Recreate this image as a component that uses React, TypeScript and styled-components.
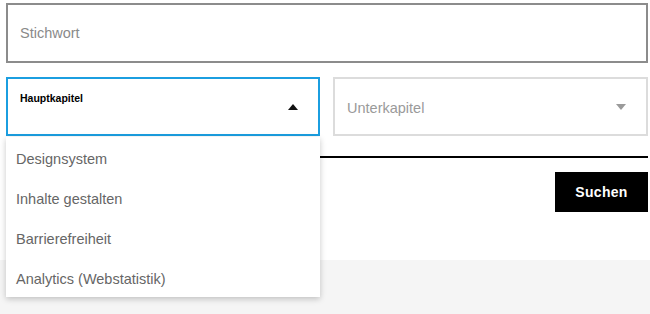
import styled, { createGlobalStyle } from 'styled-components';

const GlobalStyle = createGlobalStyle`
  html, body {
    margin: 0;
    padding: 0;
    background: #fff;
    font-family: "Liberation Sans", Arial, sans-serif;
  }
`;

const chapters = ['Designsystem', 'Inhalte gestalten', 'Barrierefreiheit', 'Analytics (Webstatistik)'];

const Caret = ({ up, color }: { up?: boolean; color: string }) => (
  <svg width="10" height="6" viewBox="0 0 10 6">
    <path d={up ? 'M0 6 L5 0 L10 6 Z' : 'M0 0 L5 6 L10 0 Z'} fill={color} />
  </svg>
);

const App = () => (
  <>
    <GlobalStyle />
    <Form>
      <Keyword placeholder="Stichwort" />
      <SelectRow>
        <SelectBox $open>
          <FloatLabel>Hauptkapitel</FloatLabel>
          <Caret up color="#111" />
          <Menu>
            {chapters.map((c) => (
              <MenuItem key={c}>{c}</MenuItem>
            ))}
          </Menu>
        </SelectBox>
        <SelectBox>
          <Placeholder>Unterkapitel</Placeholder>
          <Caret color="#9a9a9a" />
        </SelectBox>
      </SelectRow>
      <Divider />
      <Actions>
        <SearchButton>Suchen</SearchButton>
      </Actions>
    </Form>
    <Footer />
  </>
);

const Form = styled.div`
  display: flex;
  flex-direction: column;
  padding: 3px 2px 0 6px;
`;

const Keyword = styled.input`
  display: block;
  box-sizing: border-box;
  width: 100%;
  height: 60px;
  border: 2px solid #8c8c8c;
  padding: 0 12px;
  font-family: inherit;
  font-size: 14.5px;
  color: #333;
  outline: none;

  &::placeholder {
    color: #8a8a8a;
  }
`;

const SelectRow = styled.div`
  display: grid;
  grid-template-columns: 314px 1fr;
  gap: 13px;
  margin-top: 14px;
`;

const SelectBox = styled.div<{ $open?: boolean }>`
  position: relative;
  box-sizing: border-box;
  height: 59px;
  display: flex;
  align-items: center;
  padding: 0 20px 0 12px;
  border: ${(p) => (p.$open ? '2px solid #1b9ee0' : '2px solid #dcdcdc')};
  background: #fff;
`;

const FloatLabel = styled.div`
  flex: 1;
  align-self: flex-start;
  padding-top: 13px;
  font-size: 10.5px;
  font-weight: bold;
  color: #000;
`;

const Placeholder = styled.div`
  flex: 1;
  padding-top: 2px;
  font-size: 14.5px;
  color: #9a9a9a;
`;

const Menu = styled.ul`
  position: absolute;
  left: -2px;
  right: -2px;
  top: calc(100% + 3px);
  margin: 0;
  padding: 0;
  list-style: none;
  background: #fff;
  box-shadow: 0 2px 6px rgba(0, 0, 0, 0.22);
  z-index: 2;
`;

const MenuItem = styled.li`
  height: 40px;
  display: flex;
  align-items: center;
  padding: 4px 0 0 10px;
  box-sizing: border-box;
  font-size: 14.5px;
  color: #666;
`;

const Divider = styled.div`
  margin-top: 20px;
  height: 2px;
  background: #000;
`;

const Actions = styled.div`
  display: flex;
  justify-content: flex-end;
  margin-top: 14px;
`;

const SearchButton = styled.button`
  width: 93px;
  height: 40px;
  border: none;
  background: #000;
  color: #fff;
  font-family: inherit;
  font-size: 14px;
  font-weight: 900;
  letter-spacing: 0.3px;
`;

const Footer = styled.div`
  margin-top: 48px;
  height: 60px;
  background: #f5f5f5;
`;

export default App;
